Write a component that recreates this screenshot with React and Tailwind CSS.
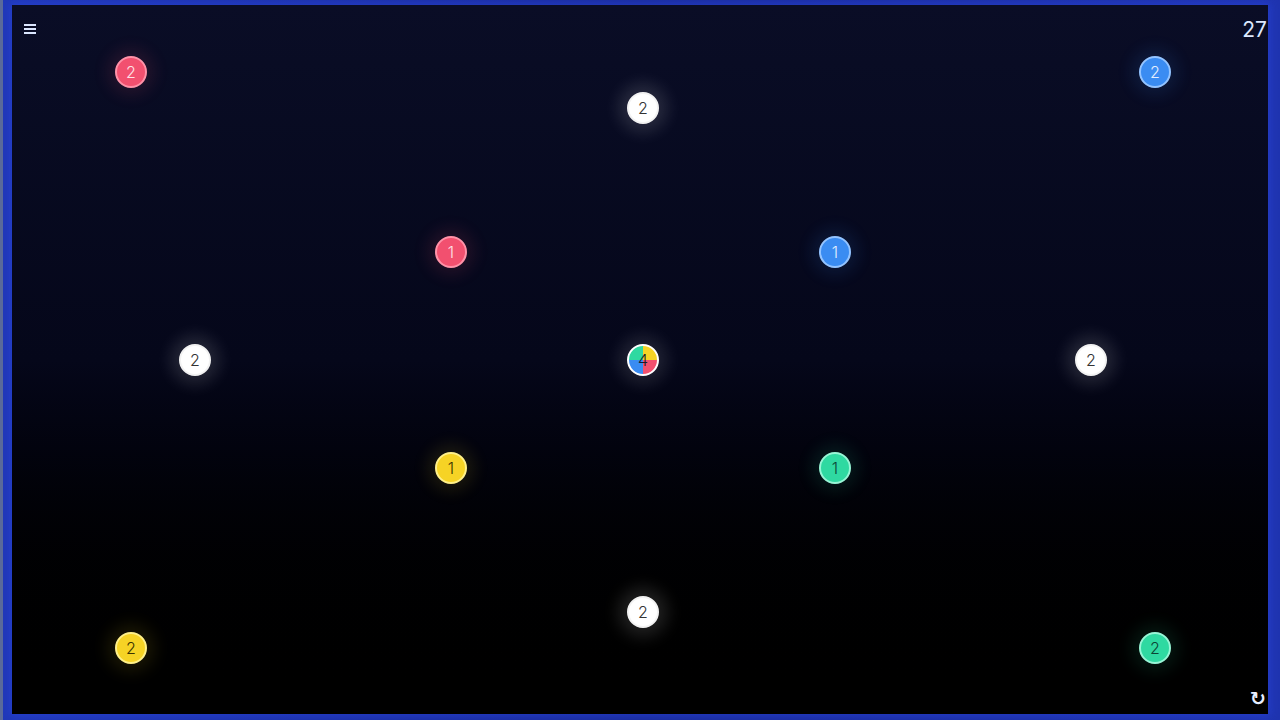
import React from 'react';

// node palette: fill, ring, text, glow
const palette = {
    pink: 'bg-[#f2506f] border-[#ff92a8] text-[#ffe0e6] shadow-[0_0_16px_8px_rgba(242,80,111,0.11)]',
    blue: 'bg-[#3a8cf2] border-[#94c4ff] text-[#e2eeff] shadow-[0_0_16px_8px_rgba(58,140,242,0.11)]',
    yellow: 'bg-[#f6d325] border-[#fff08a] text-[#3b3300] shadow-[0_0_16px_8px_rgba(246,211,37,0.10)]',
    green: 'bg-[#2fd9a1] border-[#98f5d6] text-[#0b4535] shadow-[0_0_16px_8px_rgba(47,217,161,0.10)]',
    white: 'bg-[#ffffff] border-[#f2f2f2] text-[#333333] shadow-[0_0_16px_9px_rgba(255,255,255,0.12)]',
    multi: 'bg-[conic-gradient(#f6d325_0_25%,#f2506f_25%_50%,#3a8cf2_50%_75%,#2fd9a1_75%_100%)] border-[#ffffff] text-[#1a1a2a] shadow-[0_0_16px_9px_rgba(255,255,255,0.10)]',
};

const nodes = [
    { x: 131, y: 72, c: 'pink', n: 2 },
    { x: 643, y: 108, c: 'white', n: 2 },
    { x: 1155, y: 72, c: 'blue', n: 2 },
    { x: 451, y: 252, c: 'pink', n: 1 },
    { x: 835, y: 252, c: 'blue', n: 1 },
    { x: 195, y: 360, c: 'white', n: 2 },
    { x: 643, y: 360, c: 'multi', n: 4 },
    { x: 1091, y: 360, c: 'white', n: 2 },
    { x: 451, y: 468, c: 'yellow', n: 1 },
    { x: 835, y: 468, c: 'green', n: 1 },
    { x: 643, y: 612, c: 'white', n: 2 },
    { x: 131, y: 648, c: 'yellow', n: 2 },
    { x: 1155, y: 648, c: 'green', n: 2 },
];

function Node({ x, y, c, n }) {
    // left offset accounts for the 3px frame edge on the root
    return (
        <div
            className={`absolute w-[32px] h-[32px] rounded-full border-2 flex items-center justify-center text-[16px] font-light leading-none ${palette[c]}`}
            style={{ left: x - 19, top: y - 16 }}
        >
            {n}
        </div>
    );
}

export default function App() {
    return (
        <div className="relative w-[1280px] h-[720px] overflow-hidden font-['Inter','Liberation_Sans',sans-serif] bg-gradient-to-r from-[#2038b8] via-[#1a2c9c] to-[#1f34b0] border-l-[3px] border-[#5a6a9a] pt-[5px] pl-[9px] pr-[12px] pb-[6px]">
            <div className="w-full h-full bg-gradient-to-b from-[#0a0d26] via-[#05071a] to-[#000000] shadow-[0_0_8px_2px_rgba(40,70,220,0.55)]" />

            {/* menu */}
            <div className="absolute left-[21px] top-[24px] flex flex-col gap-[2px]">
                <span className="block w-[12px] h-[2px] bg-[#dbe6ff]" />
                <span className="block w-[12px] h-[2px] bg-[#dbe6ff]" />
                <span className="block w-[12px] h-[2px] bg-[#dbe6ff]" />
            </div>

            {/* move counter */}
            <div className="absolute right-[13px] top-[19px] text-[21px] text-[#dde8ff] font-normal leading-none">27</div>

            {nodes.map((node, i) => (
                <Node key={i} {...node} />
            ))}

            {/* restart */}
            <div className="absolute right-[14px] bottom-[12px] text-[19px] text-[#e6eeff] font-bold leading-none font-['DejaVu_Sans',sans-serif]">↻</div>
        </div>
    );
}
